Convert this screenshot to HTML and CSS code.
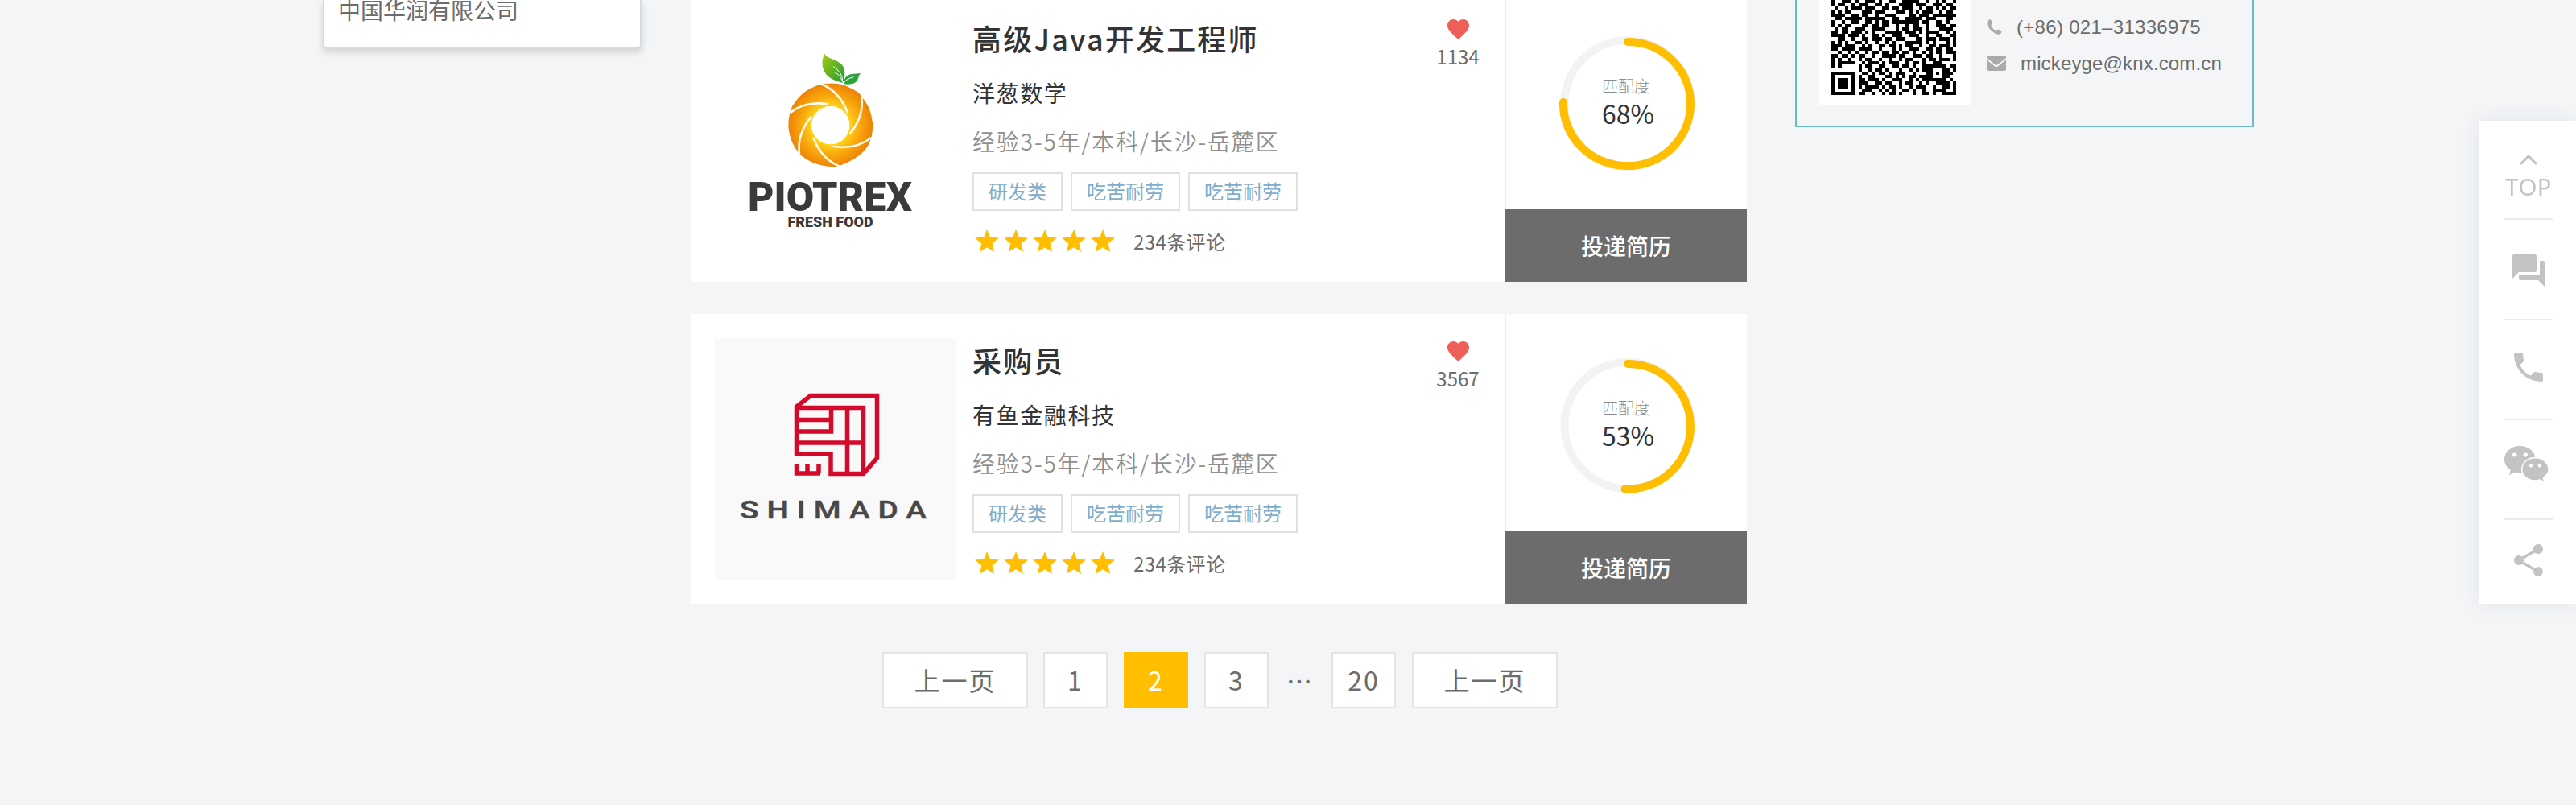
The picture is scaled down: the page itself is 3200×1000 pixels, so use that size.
FILE: index.html
```html
<!DOCTYPE html>
<html lang="zh-CN">
<head>
<meta charset="utf-8">
<title>职位列表</title>
<link rel="stylesheet" href="styles.css">
</head>
<body>
<svg class="defs" width="0" height="0">
  <defs>
    <symbol id="star" viewBox="0 0 30 28"><path d="M15 0l3.800 9.600L30 10.600l-8.400 7L24.300 28 15 22.200 5.700 28l2.700-10.400L0 10.600l11.200-1z"/></symbol>
    <symbol id="heart" viewBox="2 3 20 18.350" preserveAspectRatio="none"><path d="M12 21.350l-1.450-1.320C5.400 15.360 2 12.280 2 8.500 2 5.420 4.420 3 7.500 3c1.740 0 3.410.81 4.500 2.090C13.090 3.810 14.760 3 16.500 3 19.580 3 22 5.420 22 8.500c0 3.780-3.400 6.860-8.550 11.540L12 21.350z"/></symbol>
    <symbol id="call" viewBox="3 3 18 18" preserveAspectRatio="none"><path d="M6.620 10.790c1.440 2.830 3.760 5.140 6.590 6.590l2.200-2.200c.27-.27.67-.36 1.020-.24 1.120.37 2.330.57 3.570.57.55 0 1 .45 1 1V20c0 .55-.45 1-1 1-9.390 0-17-7.610-17-17 0-.55.45-1 1-1h3.500c.55 0 1 .45 1 1 0 1.250.2 2.450.57 3.570.11.35.03.74-.25 1.020l-2.200 2.200z"/></symbol>
  </defs>
</svg>
<div class="page">
  <aside class="companies">中国华润有限公司</aside>

  <main class="jobs">
    <article class="card">
      <svg class="logo" viewBox="0 0 300 300">
        <defs>
          <radialGradient id="orange" gradientUnits="userSpaceOnUse" cx="0" cy="0" r="157">
            <stop offset=".44" stop-color="#ffd51c"/><stop offset=".7" stop-color="#f9a80d"/><stop offset="1" stop-color="#ee8206"/>
          </radialGradient>
          <linearGradient id="leaf" x1="0" y1="0" x2="1" y2="1"><stop offset="0" stop-color="#a5cb13"/><stop offset="1" stop-color="#239a35"/></linearGradient>
        </defs>
        <g transform="translate(22 30) scale(.3333)">
          <path fill="url(#leaf)" d="M343 50c10 24 72 20 75 66 1 18-2 32-8 42-14-4-46-10-62-32-20-28-14-58-5-76z"/>
          <path fill="#2ba53a" d="M477 122c-20 6-46-2-58 20-4 8-5 14-4 20 14 4 42 4 51-14 4-10 4-16 11-26z"/>
          <path fill="none" stroke="#fff" stroke-width="3" d="M375 97q35 22 36 60M380 119q24 12 28 34M451 137q-32 8-38 26"/>
          <g transform="translate(365 317)">
            <path fill="url(#orange)" fill-rule="evenodd" d="M-48-149Q25-168 78-137Q110-122 113-110Q150-72 157-10Q160 40 140 75Q110 125 20 155Q-55 155-105 116Q-150 75-157 5Q-157-55-135-82Q-105-130-48-149zM0-71a71 71 0 1 0 .1 0z"/>
            <g fill="none" stroke="#fffbe8" stroke-width="8">
              <path id="blade" d="M-35-154Q34-126 64-46"/>
              <use href="#blade" transform="rotate(60)"/><use href="#blade" transform="rotate(120)"/><use href="#blade" transform="rotate(180)"/><use href="#blade" transform="rotate(240)"/><use href="#blade" transform="rotate(300)"/>
            </g>
            <circle r="70" fill="#fff"/>
          </g>
        </g>
        <text class="piotrex" x="41" y="242" textLength="204" lengthAdjust="spacingAndGlyphs">PIOTREX</text>
        <text class="fresh" x="90.500" y="261.500" textLength="106" lengthAdjust="spacingAndGlyphs">FRESH FOOD</text>
      </svg>
      <div class="info">
        <h2>高级Java开发工程师</h2>
        <p class="company">洋葱数学</p>
        <p class="terms">经验3-5年/本科/长沙-岳麓区</p>
        <div class="tags"><span>研发类</span><span>吃苦耐劳</span><span>吃苦耐劳</span></div>
        <div class="rating">
          <svg><use href="#star"/></svg><svg><use href="#star"/></svg><svg><use href="#star"/></svg><svg><use href="#star"/></svg><svg><use href="#star"/></svg>
          <span>234条评论</span>
        </div>
      </div>
      <div class="likes"><svg><use href="#heart"/></svg><span>1134</span></div>
      <div class="side">
        <div class="match">
          <svg class="ring" viewBox="0 0 180 180">
            <circle class="track" cx="92" cy="88.500" r="78.500"/>
            <path class="value" d="M92 12A78 77 0 0 1 170 89A78 77 0 0 1 91 166A79 77 0 0 1 12 87"/>
          </svg>
          <div class="score"><small>匹配度</small><b>68%</b></div>
        </div>
        <button>投递简历</button>
      </div>
    </article>

    <article class="card">
      <svg class="logo shimada-logo" viewBox="0 0 300 300">
        <g class="mark">
          <path d="M119 71.500H201.500V149L184.500 168.500H144V144H101.500V85z"/>
          <path d="M101.500 86.500H184.500V168M164.500 86V168M101.500 101.500H144.500M144.500 87V116H101.500M101.500 130H185M101.500 156V168H131M115 156V168M129 156V168"/>
        </g>
        <text class="shimada" x="31" y="224" textLength="242" lengthAdjust="spacingAndGlyphs">SHIMADA</text>
      </svg>
      <div class="info">
        <h2>采购员</h2>
        <p class="company">有鱼金融科技</p>
        <p class="terms">经验3-5年/本科/长沙-岳麓区</p>
        <div class="tags"><span>研发类</span><span>吃苦耐劳</span><span>吃苦耐劳</span></div>
        <div class="rating">
          <svg><use href="#star"/></svg><svg><use href="#star"/></svg><svg><use href="#star"/></svg><svg><use href="#star"/></svg><svg><use href="#star"/></svg>
          <span>234条评论</span>
        </div>
      </div>
      <div class="likes"><svg><use href="#heart"/></svg><span>3567</span></div>
      <div class="side">
        <div class="match">
          <svg class="ring" viewBox="0 0 180 180">
            <circle class="track" cx="92" cy="88.500" r="78.500"/>
            <path class="value" d="M92 12A78 77.800 0 0 1 170 90A78 77.800 0 0 1 88.500 167.500"/>
          </svg>
          <div class="score"><small>匹配度</small><b>53%</b></div>
        </div>
        <button>投递简历</button>
      </div>
    </article>

    <nav class="pager">
      <a class="wide">上一页</a><a>1</a><a class="on">2</a><a>3</a><i>…</i><a>20</a><a class="wide">上一页</a>
    </nav>
  </main>

  <section class="contact">
    <div class="qr-box"><svg id="qr" class="qr" viewBox="0 0 37 28" preserveAspectRatio="none" shape-rendering="crispEdges"></svg></div>
    <ul>
      <li><svg class="tel" viewBox="0 0 20 20" preserveAspectRatio="none"><path d="M1 2.500Q4-1.500 6 1.500Q8 5 6.500 6.500Q5 7.500 6 9Q8 13 11.500 14.500Q12.500 15 13.800 13.500Q16 12.800 19 15.500Q20.500 17 17 19.500Q13 21 7 15.500Q-2 7.500 1 2.500z"/></svg><span class="number">(+86) 021–31336975</span></li>
      <li><svg class="mail" viewBox="0 0 24 19" preserveAspectRatio="none"><path d="M2 0H22Q24 0 24 2V3L12 12.500 0 3V2Q0 0 2 0zM0 5.300L10.500 13.700Q12 14.800 13.500 13.700L24 5.300V17Q24 19 22 19H2Q0 19 0 17z"/></svg><span class="email">mickeyge@knx.com.cn</span></li>
    </ul>
  </section>
</div>

<div class="dock">
  <div class="cell top">
    <svg width="22" height="13" viewBox="0 0 22 13"><path class="chevron" d="M1 12L11 2 21 12"/></svg>
    <span class="top-label">TOP</span>
  </div>
  <div class="cell chat"><svg width="40" height="40" viewBox="2 2 20 20"><path d="M21 6h-2v9H6v2c0 .55.45 1 1 1h11l4 4V7c0-.55-.45-1-1-1zm-4 6V3c0-.55-.45-1-1-1H3c-.55 0-1 .45-1 1v14l4-4h10c.55 0 1-.45 1-1z"/></svg></div>
  <div class="cell phone"><svg width="36" height="36"><use href="#call"/></svg></div>
  <div class="cell wechat"><svg width="56" height="46" viewBox="0 0 56 37.500" preserveAspectRatio="none">
    <path d="M19.300 0C30 0 38.600 6 38.600 13.700S30 27.300 19.300 27.300q-3.500 0-6.500-.8L6 29.500l1.800-5.300C3 22 0 18 0 13.700 0 6 8.600 0 19.300 0z"/>
    <path class="bubble" d="M38.300 12C47.500 12 55 17.200 55 23.700q0 4.800-6.500 8.500l1.200 4.500-5.400-2.400q-3 .8-6 .8C29 35.100 21.700 30 21.700 23.600S29 12 38.300 12z"/>
    <g fill="#fff"><ellipse cx="12.700" cy="9" rx="2.800" ry="2"/><ellipse cx="26.300" cy="9" rx="2.800" ry="2"/><ellipse cx="33" cy="20" rx="2.100" ry="1.700"/><ellipse cx="43.700" cy="20" rx="2.100" ry="1.700"/></g>
  </svg></div>
  <div class="cell share"><svg width="36" height="40" viewBox="3 2 18 20"><path d="M18 16.080c-.76 0-1.440.3-1.960.77L8.910 12.700c.05-.23.09-.46.09-.7s-.04-.47-.09-.7l7.050-4.110c.54.5 1.250.81 2.040.81 1.660 0 3-1.340 3-3s-1.340-3-3-3-3 1.340-3 3c0 .24.04.47.09.7L8.040 9.810C7.500 9.310 6.790 9 6 9c-1.660 0-3 1.340-3 3s1.340 3 3 3c.79 0 1.500-.31 2.040-.81l7.120 4.160c-.05.21-.08.43-.08.65 0 1.610 1.310 2.920 2.920 2.920s2.920-1.310 2.920-2.920-1.310-2.920-2.920-2.920z"/></svg></div>
</div>
<script src="qr.js"></script>
</body>
</html>
```
FILE: styles.css
```css
* { box-sizing: border-box; margin: 0; padding: 0; }
body {
  width: 3200px; height: 1000px; overflow: hidden; background: #f3f5f7; color: #6c6c6c;
  font-family: "Noto Sans CJK SC", sans-serif;
}
.defs { display: block; }
.page { display: flex; align-items: flex-start; padding-left: 401px; }

.companies {
  width: 396px; height: 60px; padding-left: 17px; margin-right: 61px;
  font-size: 28px; line-height: 24px; background: #fff; color: #6c6c6c;
  border: 2px solid #d3dce6; border-top: 0; border-radius: 0 0 4px 4px;
  box-shadow: 0 4px 10px rgba(0, 0, 0, .16);
}

.jobs { width: 1312px; margin: -10px 60px 0 0; }
.card { display: flex; height: 360px; margin-bottom: 40px; background: #fff; }
.logo { width: 300px; height: 300px; margin: 30px 20px 0 30px; flex: none; }
.shimada-logo { background: #f9f9fa; }
.piotrex { font: 900 50px Roboto, sans-serif; fill: #3b393b; }
.fresh { font: 900 17.500px Roboto, sans-serif; fill: #3b393b; }
.shimada { font: 500 31px Roboto, sans-serif; letter-spacing: 8px; fill: #48484a; stroke: #48484a; stroke-width: .5px; }
.mark path { fill: none; stroke: #d40a2b; stroke-width: 5.500px; }

.info { width: 520px; padding-top: 30px; }
.info h2 { font-size: 36px; line-height: 54px; font-weight: 500; letter-spacing: 2.150px; color: #333; }
.info p { font-size: 28px; line-height: 44px; letter-spacing: 1.600px; }
.info .company { margin-top: 19px; color: #333; }
.info .terms { margin-top: 16px; color: #8f8f8f; font-weight: 350; letter-spacing: 1.850px; }
.tags { display: flex; gap: 10px; margin-top: 17px; }
.tags span {
  height: 48px; padding: 0 18px; border: 2px solid #e0e0e0; color: #7eaecb;
  font-size: 24px; line-height: 42px;
}
.rating { display: flex; align-items: center; gap: 6px; height: 42px; margin: 16px 0 0 3px; }
.rating svg { width: 30px; height: 28px; fill: #ffbf00; }
.rating span { margin-left: 17px; font-size: 24px; letter-spacing: .4px; }

.likes { display: flex; flex-direction: column; align-items: center; width: 80px; margin: 33.500px 18px 0 auto; }
.likes svg { width: 27px; height: 25px; fill: #ee5f57; }
.likes span { font-size: 24px; line-height: 32px; margin-top: 5px; }

.side { width: 301px; border-left: 2px solid #ececec; }
.match { display: grid; height: 270px; padding: 50px 0 0 59px; }
.ring, .score { grid-area: 1 / 1; width: 180px; height: 180px; }
.ring { fill: none; stroke-width: 10px; }
.track { stroke: #f3f3f3; }
.value { stroke: #ffbf00; stroke-linecap: round; }
.score { display: flex; flex-direction: column; padding: 52px 0 0 60px; }
.score small { font-size: 20px; line-height: 30px; color: #8c8c8c; font-weight: 300; }
.score b { font-size: 32px; line-height: 40px; font-weight: 400; color: #333; margin-top: -2px; }
.side button {
  display: block; width: 300px; height: 90px; margin-left: -1px; border: 0; background: #6c6c6c; color: #fff;
  font: 500 28px/90px "Noto Sans CJK SC", sans-serif;
}

.pager { display: flex; gap: 20px; padding: 20px 0 0 238px; }
.pager a, .pager i {
  width: 80px; height: 70px; background: #fff; border: 2px solid #e4e4e4;
  font-size: 32px; line-height: 65px; text-align: center; letter-spacing: 2px; font-style: normal;
}
.pager .wide { width: 181px; }
.pager .wide:first-child { margin-right: -1px; }
.pager .on { background: #ffbf00; border-color: #ffbf00; color: #fff; }
.pager i { width: 38px; background: none; border: 0; line-height: 70px; }

.contact {
  display: flex; width: 570px; height: 158px; padding-left: 28px;
  border: 2px solid #6cbac5; border-top: 0;
}
.qr-box { width: 188px; height: 130px; padding-left: 15px; background: #fff; }
.qr { display: block; width: 155px; height: 118px; }
.contact ul { list-style: none; margin-left: 20px; }
.contact li {
  display: flex; align-items: center; height: 45px;
  font: 24px "Liberation Sans", sans-serif; white-space: nowrap;
}
.contact li:first-child { margin-top: 11px; }
.contact li svg { fill: #aaa; margin-right: 18px; }
.tel { width: 19px; height: 19px; }
.mail { width: 24px; height: 19px; }
.contact .number { letter-spacing: .3px; }
.contact .email { letter-spacing: .15px; }

.dock {
  position: fixed; right: 0; top: 150px; width: 120px; height: 600px;
  background: #fff; box-shadow: 0 0 24px rgba(60, 70, 80, .09);
}
.cell {
  display: flex; justify-content: center; width: 60px; height: 124px; margin-left: 31px;
  border-bottom: 2px solid #ebebeb; fill: #c3c3c3;
}
.cell svg { flex: none; }
.cell.top { height: 123px; flex-direction: column; justify-content: flex-start; align-items: center; padding-top: 42px; }
.chevron { fill: none; stroke: #c3c3c3; stroke-width: 3px; }
.top-label { margin-top: 7px; font: 28px/40px Lato, sans-serif; letter-spacing: 1px; color: #c3c3c3; }
.chat { height: 125px; padding-top: 43px; }
.phone { padding-top: 40px; }
.wechat { padding-top: 32px; }
.wechat svg { margin-left: -4px; }
.bubble { stroke: #fff; stroke-width: 1.400px; }
.share { border: 0; padding-top: 30px; }
```
FILE: qr.js
```js
// Module rows of the code, top to bottom.
const rows = [
  "1001110100111010011001111100100101001",
  "1011001011100110100011110111001110110",
  "0100101110111001101101110010110101011",
  "1010110001110111000111010101110010110",
  "1111001101100100111000011011101111111",
  "0110111110111111001100111110111000110",
  "1001001100110101101111111101100110100",
  "1010110001101101100100101100100111011",
  "0101100111001111000101101110100011110",
  "1101101110101000111110111010111100101",
  "1111011101001101001110011100100110011",
  "0011001001101110110111000110111011101",
  "1010100110100100101000111110101000101",
  "1110111001010011011010110010011011101",
  "1101111011110010001010011100110110110",
  "0010010100101101101101101001010110111",
  "1101101011001001111011001110110010001",
  "1010010010110010010010110001011011101",
  "1011111001011101011100101101001110000",
  "1010000010110011001101101001111111011",
  "0000000010010110100010010101110001101",
  "1111111001101011010111001000110101110",
  "1000001010011000110101011011110001100",
  "1011101011011101001110010101111111010",
  "1011101011100110110010110010100111101",
  "1011101010111101011010010111001001101",
  "1000001001110010101001101001001111001",
  "1111111011001001011010001001101001111"
];
const ns = "http://www.w3.org/2000/svg";
const path = document.createElementNS(ns, "path");
path.setAttribute("d", rows.map((row, y) =>
  [...row].map((bit, x) => bit === "1" ? `M${x} ${y}h1v1h-1z` : "").join("")).join(""));
document.getElementById("qr").append(path);
```
